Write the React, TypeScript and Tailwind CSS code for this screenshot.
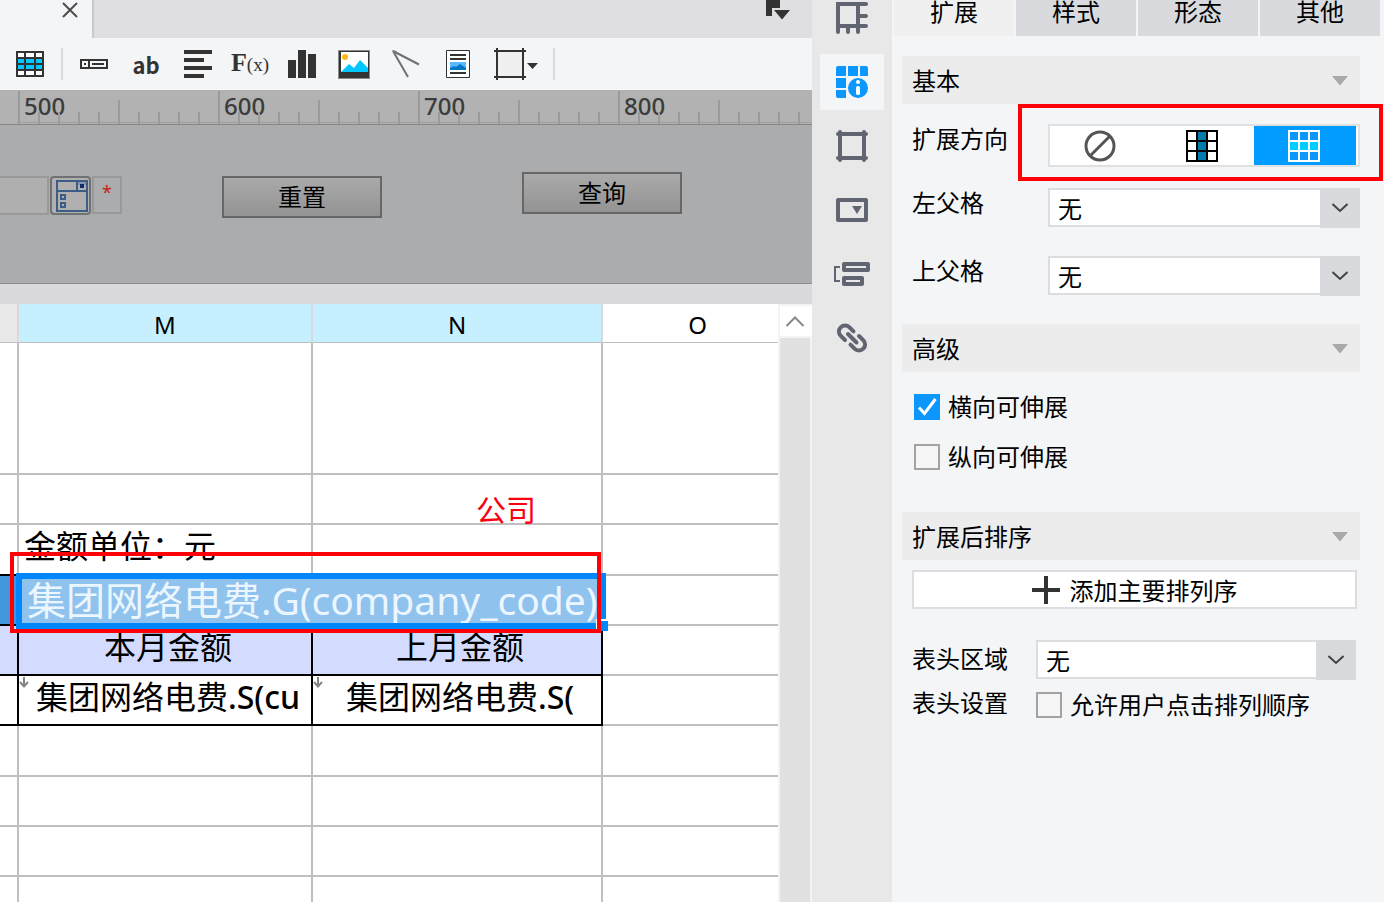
import { useState, type ReactNode } from "react";

const iconGray = "#616571";
const ink = "#333333";

function Arrow() {
  return (
    <svg width="16" height="10" viewBox="0 0 16 10" aria-hidden="true">
      <path d="M0 0h16L8 9.5z" fill="#a9a9aa" />
    </svg>
  );
}

function SectionHeader({ title }: { title: string }) {
  return (
    <h2 className="flex h-12 items-center bg-[#ececec] pt-0.5 pr-3 pl-2.5">
      <span className="flex-1">{title}</span>
      <Arrow />
    </h2>
  );
}

function Dropdown({ id }: { id: string }) {
  return (
    <div className="relative h-10 flex-1">
      <select
        id={id}
        className="h-[39px] w-full appearance-none border-2 border-[#dcdde0] bg-white pt-0.5 pl-2 leading-8 outline-none"
      >
        <option>无</option>
      </select>
      <span className="pointer-events-none absolute top-0 right-0 flex h-10 w-10 items-center justify-center bg-[#d8dadd]">
        <svg width="16" height="10" viewBox="0 0 16 10" fill="none" aria-hidden="true">
          <path d="M0.5 1L8 8L15.5 1" stroke="#444" strokeWidth="2" />
        </svg>
      </span>
    </div>
  );
}

function Check({ label, on = false }: { label: string; on?: boolean }) {
  const [checked, setChecked] = useState(on);
  return (
    <label className="flex h-[26px] items-center gap-2">
      <span className="relative h-[26px] w-[26px] shrink-0">
        <input
          type="checkbox"
          checked={checked}
          onChange={() => setChecked(!checked)}
          className="block h-[26px] w-[26px] appearance-none border-2 border-[#a3a3a3] bg-[#f6f6f7] checked:border-[#0b97fc] checked:bg-[#0b97fc]"
        />
        {checked && (
          <svg className="pointer-events-none absolute inset-0" viewBox="0 0 26 26" fill="none" aria-hidden="true">
            <path d="M5 13.5L10.5 19.5L21.5 5" stroke="#fff" strokeWidth="3" />
          </svg>
        )}
      </span>
      <span className="leading-8">{label}</span>
    </label>
  );
}

function Tool({ label, children }: { label: string; children: ReactNode }) {
  return (
    <button aria-label={label} className="flex h-full w-[52px] shrink-0 items-center justify-center">
      {children}
    </button>
  );
}

function Toolbar() {
  return (
    <div className="flex h-[52px] shrink-0 items-center bg-[#f4f5f7]">
      <button aria-label="表格" className="flex w-[60px] shrink-0 justify-center">
        <svg width="28" height="26" viewBox="0 0 28 26">
          <path d="M0 0h28v26H0z" fill={ink} />
          <path d="M2 2h6v4H2zM10 2h8v4h-8zM20 2h6v4h-6zM2 20h6v4H2zM10 20h8v4h-8zM20 20h6v4h-6z" fill="#fff" />
          <path d="M2 8h6v4H2zM10 8h8v4h-8zM20 8h6v4h-6zM2 14h6v4H2zM10 14h8v4h-8zM20 14h6v4h-6z" fill="#00c8ff" />
        </svg>
      </button>
      <span className="mr-[5px] ml-px h-8 w-0.5 shrink-0 bg-[#d8dadd]" />
      <Tool label="文本框">
        <svg width="28" height="10" viewBox="0 0 28 10" fill="none" stroke={ink} strokeWidth="2">
          <path d="M1 1h26v8H1zM9 0v10M12 5h12" />
          <path d="M4 4h2v2H4z" fill={ink} stroke="none" />
        </svg>
      </Tool>
      <Tool label="文本">
        <span className="font-['Noto_Sans_CJK_SC',sans-serif] text-[22px] leading-8 font-bold text-[#333]">ab</span>
      </Tool>
      <Tool label="对齐">
        <svg width="28" height="28" viewBox="0 0 28 28" fill={ink}>
          <path d="M0 0h28v4H0zM0 8h20v4H0zM0 16h28v4H0zM0 24h20v4H0z" />
        </svg>
      </Tool>
      <Tool label="公式">
        <span className="flex items-baseline font-['Liberation_Serif',serif] leading-8 text-[#333]">
          <span className="text-[26px] font-bold">F</span>
          <span className="text-[19px]">(x)</span>
        </span>
      </Tool>
      <Tool label="图表">
        <svg width="28" height="28" viewBox="0 0 28 28" fill={ink}>
          <path d="M0 10h8v18H0zM10 0h8v28h-8zM20 4h8v24h-8z" />
        </svg>
      </Tool>
      <Tool label="图片">
        <svg width="32" height="29" viewBox="0 0 32 29">
          <path d="M0 0h32v29H0z" fill="#8b8b8b" />
          <path d="M1 1h30v27H1z" fill={ink} />
          <path d="M3 2h27v20H3z" fill="#fff" />
          <circle cx="7" cy="7" r="3" fill="#fdb913" />
          <path d="M3 22l8-8 5 4 6-8 8 8v4z" fill="#00c8ff" />
        </svg>
      </Tool>
      <Tool label="斜线">
        <svg width="28" height="28" viewBox="0 0 28 28" fill="none" stroke="#707070" strokeWidth="2">
          <path d="M1 1l26 13.5M1 1l15 26" />
          <path d="M0 0l5 1.500-2 3z" fill="#777" stroke="none" />
        </svg>
      </Tool>
      <Tool label="子报表">
        <svg width="24" height="28" viewBox="0 0 24 28">
          <path d="M.5.5h23v27H.5z" fill="#fff" stroke={ink} />
          <path d="M4 4h16v2H4zM4 8h16v2H4zM4 22h16v2H4z" fill={ink} />
          <path d="M4 12h16v8H4z" fill="#57baff" />
          <path d="M4 18l4-2 2 1 4-3 6 4v2H4z" fill="#0076c4" />
        </svg>
      </Tool>
      <button aria-label="边框" className="mr-[5px] ml-2.5 flex w-[54px] shrink-0 items-center">
        <svg width="46" height="32" viewBox="0 0 46 32">
          <path d="M3 3h26v26H3z" fill="#f0f0f0" />
          <path d="M0 3h32M0 29h32M3 0v32M29 0v32" stroke={ink} strokeWidth="2" />
          <path d="M33 15h11l-5.500 6z" fill={ink} />
        </svg>
      </button>
      <span className="h-8 w-0.5 shrink-0 bg-[#d8dadd]" />
    </div>
  );
}

function Ruler() {
  return (
    <div className="flex h-[35px] shrink-0 overflow-hidden border-b border-[#858687] bg-[#b2b2b2] pl-[17px]">
      {[500, 600, 700, 800].map((n) => (
        <div key={n} className="relative h-full w-[200px] shrink-0">
          <span className="block pl-[7px] text-2xl leading-8 font-medium text-[#3c3c3c]">{n}</span>
          <svg className="absolute inset-0" width="200" height="34" viewBox="0 0 200 34" aria-hidden="true">
            <path
              d="M2 1v33M102 10v24M22 22v12M42 22v12M62 22v12M82 22v12M122 22v12M142 22v12M162 22v12M182 22v12"
              stroke="#9a9a9a"
              strokeWidth="2"
            />
            <path d="M0 32.500h200" stroke="#a0a0a0" />
          </svg>
        </div>
      ))}
    </div>
  );
}

function ParamPane() {
  const button =
    "h-[42px] w-40 shrink-0 border-2 border-[#676767] bg-linear-to-b from-[#aaaaaa] to-[#939393] leading-9 text-black";
  return (
    <div className="flex h-[159px] shrink-0 items-start overflow-hidden border-b border-[#8a8b8c] bg-[#abacae] pt-[47px]">
      <input
        aria-label="参数"
        className="mt-1 h-[39px] w-[49px] shrink-0 border-2 border-l-0 border-[#999] bg-[#afafaf] outline-none"
      />
      <button
        aria-label="下拉"
        className="mt-1 ml-px flex h-[39px] w-[41px] shrink-0 items-center justify-center rounded border-2 border-[#707172] bg-[#b0b0b1] pl-0.5"
      >
        <svg width="32" height="32" viewBox="0 0 32 32" fill="none" stroke="#3c5d85" strokeWidth="2">
          <path d="M1 1h30v30H1zM1 11h30M21 1v10M5 15h4v4H5zM5 23h4v4H5z" />
          <path d="M22 2h8v3h-8z" fill="#8795b0" stroke="none" />
          <path d="M24 4h4v4h-4z" fill="#122b66" stroke="none" />
        </svg>
      </button>
      <span className="mt-1 ml-px h-[38px] w-[30px] shrink-0 border-2 border-[#999] text-center text-lg leading-7 text-[#c8201c]">
        *
      </span>
      <button className={`mt-1 ml-[100px] ${button}`}>重置</button>
      <button className={`ml-[140px] ${button}`}>查询</button>
    </div>
  );
}

function DownMark() {
  return (
    <svg className="absolute top-0 left-0" width="10" height="14" viewBox="0 0 10 14" fill="none" aria-hidden="true">
      <path d="M5 1v10M1 6l4 4.500L9 6" stroke="#858585" strokeWidth="2" />
    </svg>
  );
}

function Sheet() {
  const gray = "border-r-2 border-b-2 border-[#bfbfbf] p-0";
  const last = "border-b-2 border-[#bfbfbf] p-0";
  const black = "border-r-2 border-b-2 border-black p-0";
  return (
    <table className="w-full table-fixed border-separate border-spacing-0 bg-white text-[32px] leading-[42px] text-black">
      <colgroup>
        <col className="w-[19px]" />
        <col className="w-[294px]" />
        <col className="w-[290px]" />
        <col />
      </colgroup>
      <thead>
        <tr className="h-[39px] text-2xl leading-8">
          <th className="border-r-2 border-b border-r-[#d9d9dc] border-b-[#bfbfbf] bg-[#e8e8e8] p-0" />
          <th className="border-r-2 border-b border-r-[#d9d9dc] border-b-[#bfbfbf] bg-[#c6f0ff] p-0 pt-1 font-normal">M</th>
          <th className="border-r-2 border-b border-r-[#d9d9dc] border-b-[#bfbfbf] bg-[#c6f0ff] p-0 pt-1 font-normal">N</th>
          <th className="border-b border-[#bfbfbf] p-0 pt-1 pl-3.5 font-normal">O</th>
        </tr>
      </thead>
      <tbody>
        <tr className="h-[132px]">
          <td className={gray} />
          <td className={gray} />
          <td className={gray} />
          <td className={last} />
        </tr>
        <tr className="h-[50px]">
          <td className={gray} />
          <td className={gray} />
          <td className={`${gray} align-bottom`}>
            <span className="block pl-[163px] text-[30px] leading-[26px] text-[#fb0011]">公司</span>
          </td>
          <td className={last} />
        </tr>
        <tr className="h-[51px]">
          <td className="border-r-2 border-b-2 border-r-[#bfbfbf] border-b-black p-0" />
          <td className="border-r-2 border-b-2 border-r-[#bfbfbf] border-b-black p-0 pl-[5px] align-top">金额单位：元</td>
          <td className="border-r-2 border-b-2 border-r-[#bfbfbf] border-b-black p-0" />
          <td className={last} />
        </tr>
        <tr className="h-[50px]">
          <td className={`${black} bg-[#4196dc]`} />
          <td colSpan={2} className={`${black} bg-[#90c2ee]`}>
            <div className="relative h-12">
              <div className="h-full pl-2 text-[39px] leading-[48px] whitespace-nowrap text-[#ebf6ff]">
                集团网络电费.G(company_code)
              </div>
              <div className="pointer-events-none absolute -top-[3px] -right-[5px] -bottom-[5px] -left-[3px] border-6 border-[#0087fb]" />
              <div className="pointer-events-none absolute -right-[7px] -bottom-[7px] h-3 w-3 border-t-2 border-l-2 border-white bg-[#0087fb]" />
              <div className="pointer-events-none absolute -top-6 right-0 -bottom-[9px] -left-[9px] border-4 border-[#ff0006]" />
            </div>
          </td>
          <td className={last} />
        </tr>
        <tr className="h-[50px] text-center">
          <td className={`${black} bg-[#d3dcff]`} />
          <td className={`${black} bg-[#d3dcff] pl-1.5 align-top`}>本月金额</td>
          <td className={`${black} bg-[#d3dcff] pl-1.5 align-top`}>上月金额</td>
          <td className={last} />
        </tr>
        <tr className="h-[50px] whitespace-nowrap">
          <td className={black} />
          <td className={`${black} align-top`}>
            <div className="relative pl-[17px]">
              <DownMark />
              集团网络电费<span className="font-medium">.S(cu</span>
            </div>
          </td>
          <td className={`${black} align-top`}>
            <div className="relative pl-[33px]">
              <DownMark />
              集团网络电费<span className="font-medium">.S(</span>
            </div>
          </td>
          <td className={last} />
        </tr>
        {["h-[51px]", "h-[50px]", "h-[50px]", "h-[50px]"].map((h, i) => (
          <tr key={i} className={h}>
            <td className={gray} />
            <td className={gray} />
            <td className={gray} />
            <td className={last} />
          </tr>
        ))}
      </tbody>
    </table>
  );
}

function Editor() {
  return (
    <main className="flex min-w-0 flex-1 flex-col overflow-hidden">
      <div className="flex h-[38px] shrink-0 items-start justify-between bg-[#dfdfe1] pr-5">
        <div className="flex h-full w-[94px] justify-end border-r-2 border-[#c8c9cb] bg-[#f4f5f7] pr-3.5">
          <button aria-label="关闭" className="h-5">
            <svg width="16" height="16" viewBox="0 0 16 16">
              <path d="M1 1l14 14M15 1L1 15" stroke="#4d4d4d" strokeWidth="2" />
            </svg>
          </button>
        </div>
        <button aria-label="窗口列表">
          <svg width="26" height="20" viewBox="0 0 26 20" fill={ink}>
            <path d="M0 0h14v8H6v8H0zM8 10h16l-8 9.500z" />
          </svg>
        </button>
      </div>
      <Toolbar />
      <Ruler />
      <ParamPane />
      <div className="h-5 shrink-0 bg-[#dadadc]" />
      <div className="flex min-h-0 flex-1 overflow-hidden bg-white">
        <div className="min-w-0 flex-1">
          <Sheet />
        </div>
        <div className="flex w-[34px] shrink-0 flex-col gap-0.5 bg-[#f3f4f5] pt-0.5 pl-0.5">
          <button aria-label="向上滚动" className="flex h-[30px] items-center justify-center bg-white pr-0.5">
            <svg width="18" height="11" viewBox="0 0 18 11" fill="none">
              <path d="M.5 10L9 1.500L17.500 10" stroke="#888" strokeWidth="2" />
            </svg>
          </button>
          <div className="mr-0.5 flex-1 bg-[#e1e1e1]" />
        </div>
      </div>
    </main>
  );
}

function RailButton({ label, children }: { label: string; children: ReactNode }) {
  return (
    <button aria-label={label} className="flex h-16 w-full shrink-0 items-center justify-center">
      {children}
    </button>
  );
}

function Rail() {
  return (
    <nav className="w-20 shrink-0 overflow-hidden bg-[#e8e8e8]">
      <div className="-mt-3.5 flex flex-col items-center">
        <RailButton label="单元格元素">
          <svg width="32" height="32" viewBox="0 0 32 32" fill="none" stroke={iconGray} strokeWidth="4" strokeLinecap="round">
            <path d="M2 30V2h28M2 24h28M22 2v28M12 24v6M22 14h8" />
          </svg>
        </RailButton>
        <button aria-label="单元格属性" className="my-1 flex h-14 w-16 items-center justify-center bg-[#f4f5f7]">
          <svg width="32" height="32" viewBox="0 0 32 32" fill="#0b97fc">
            <path d="M2 0h8v10H0V2q0-2 2-2zM12 0h10v10H12zM24 0h6q2 0 2 2v8h-8zM0 12h10v10H0zM0 24h10v8H2q-2 0-2-2z" />
            <circle cx="22" cy="22" r="11" fill="#f4f5f7" />
            <circle cx="22" cy="22" r="10" />
            <circle cx="22" cy="16" r="2" fill="#fff" />
            <path d="M20 22q0-2 2-2t2 2v6q0 1-2 1t-2-1z" fill="#fff" />
          </svg>
        </button>
        <RailButton label="悬浮元素">
          <svg width="32" height="32" viewBox="0 0 32 32" fill="none" stroke={iconGray} strokeWidth="4" strokeLinecap="round">
            <path d="M2 4h28M2 28h28M4 2v28M28 2v28" />
          </svg>
        </RailButton>
        <RailButton label="控件设置">
          <svg width="32" height="24" viewBox="0 0 32 24">
            <rect x="2" y="2" width="28" height="20" fill="none" stroke={iconGray} strokeWidth="4" strokeLinejoin="round" />
            <path d="M16 8h10l-5 8z" fill={iconGray} />
          </svg>
        </RailButton>
        <RailButton label="条件属性">
          <svg width="36" height="24" viewBox="0 0 36 24" fill="none" stroke={iconGray}>
            <path d="M6 5H1v14h5" strokeWidth="2" />
            <path d="M10 2h24v6H10zM10 16h18v6H10z" strokeWidth="4" strokeLinejoin="round" />
          </svg>
        </RailButton>
        <RailButton label="超级链接">
          <svg width="32" height="32" viewBox="0 0 32 32" fill="none" stroke={iconGray} strokeWidth="4" strokeLinecap="round">
            <path d="M9 18L4.800 13.800C2.300 11.300 2.300 7.800 4.700 5.300S11 2.800 13.500 5.300L17.500 9.300" />
            <path d="M23 14L27.200 18.200C29.700 20.700 29.700 24.200 27.300 26.700S21 29.200 18.500 26.700L14.500 22.700" />
            <path d="M12 12L20.500 20.500" />
          </svg>
        </RailButton>
      </div>
    </nav>
  );
}

function DirectionPicker() {
  const cell = "flex flex-1 items-center justify-center pr-0.5";
  return (
    <div role="group" aria-labelledby="direction" className="relative flex-1">
      <div className="flex h-[43px] border-2 border-[#dfe0e2] bg-white">
        <button aria-label="不扩展" className={cell}>
          <svg width="32" height="32" viewBox="0 0 32 32" fill="none" stroke="#555" strokeWidth="3">
            <circle cx="16" cy="16" r="14" />
            <path d="M6 26L26 6" />
          </svg>
        </button>
        <button aria-label="纵向" className={cell}>
          <svg width="32" height="32" viewBox="0 0 32 32">
            <path d="M0 0h32v32H0z" />
            <path d="M2 2h8v8H2zM22 2h8v8h-8zM2 12h8v8H2zM22 12h8v8h-8zM2 22h8v8H2zM22 22h8v8h-8z" fill="#fff" />
            <path d="M12 2h8v8h-8zM12 12h8v8h-8zM12 22h8v8h-8z" fill="#007cad" />
          </svg>
        </button>
        <button aria-label="横向" aria-pressed="true" className={`mr-0.5 bg-[#009cff] ${cell}`}>
          <svg width="32" height="32" viewBox="0 0 32 32">
            <path d="M0 0h32v32H0z" fill="#fff" />
            <path d="M2 2h8v8H2zM12 2h8v8h-8zM22 2h8v8h-8zM2 22h8v8H2zM12 22h8v8h-8zM22 22h8v8h-8z" fill="#0b97fc" />
            <path d="M2 12h8v8H2zM12 12h8v8h-8zM22 12h8v8h-8z" fill="#00cdff" />
          </svg>
        </button>
      </div>
      <div className="pointer-events-none absolute -top-5 -right-[23px] -bottom-3.5 -left-[30px] border-4 border-[#ff0006]" />
    </div>
  );
}

function Properties() {
  return (
    <aside className="w-[492px] shrink-0 overflow-hidden bg-[#f4f5f7]">
      <div role="tablist" className="flex h-9 gap-0.5 pr-1 pl-0.5">
        {["扩展", "样式", "形态", "其他"].map((t, i) => (
          <button
            key={t}
            role="tab"
            aria-selected={i === 0}
            className={`h-9 flex-1 pb-3 leading-6 ${i === 0 ? "bg-[#f0f0f1]" : "bg-[#d8dadd]"}`}
          >
            {t}
          </button>
        ))}
      </div>
      <div className="pt-5 pr-6 pl-2.5">
        <SectionHeader title="基本" />
        <div className="flex items-start pt-5 pl-2.5">
          <span id="direction" className="w-[136px] leading-[30px]">扩展方向</span>
          <DirectionPicker />
        </div>
        <div className="flex items-start pt-[21px] pl-2.5">
          <label htmlFor="left-parent" className="w-[136px] leading-[30px]">左父格</label>
          <Dropdown id="left-parent" />
        </div>
        <div className="flex items-start pt-7 pb-7 pl-2.5">
          <label htmlFor="top-parent" className="w-[136px] leading-[30px]">上父格</label>
          <Dropdown id="top-parent" />
        </div>
        <SectionHeader title="高级" />
        <div className="flex flex-col gap-6 pt-[22px] pb-[42px] pl-3">
          <Check label="横向可伸展" on />
          <Check label="纵向可伸展" />
        </div>
        <SectionHeader title="扩展后排序" />
        <div className="pt-2.5 pr-[3px] pl-2.5">
          <button className="flex h-[39px] w-full items-center justify-center gap-2.5 border-2 border-[#dcdde0] bg-white">
            <svg width="28" height="28" viewBox="0 0 28 28">
              <path d="M14 0v28M0 14h28" stroke={ink} strokeWidth="4" />
            </svg>
            <span className="pt-0.5 leading-8">添加主要排列序</span>
          </button>
        </div>
        <div className="flex items-start pt-[31px] pr-1 pl-2.5">
          <label htmlFor="header-area" className="w-[124px] pt-1 leading-[30px]">表头区域</label>
          <Dropdown id="header-area" />
        </div>
        <div className="flex items-start pt-2 pl-2.5">
          <span className="w-[124px] leading-[30px]">表头设置</span>
          <div className="pt-1">
            <Check label="允许用户点击排列顺序" />
          </div>
        </div>
      </div>
    </aside>
  );
}

export default function App() {
  return (
    <div className="flex h-screen overflow-hidden bg-[#f4f5f7] font-['Noto_Sans','Noto_Sans_CJK_SC',sans-serif] text-2xl text-black">
      <Editor />
      <Rail />
      <Properties />
    </div>
  );
}
